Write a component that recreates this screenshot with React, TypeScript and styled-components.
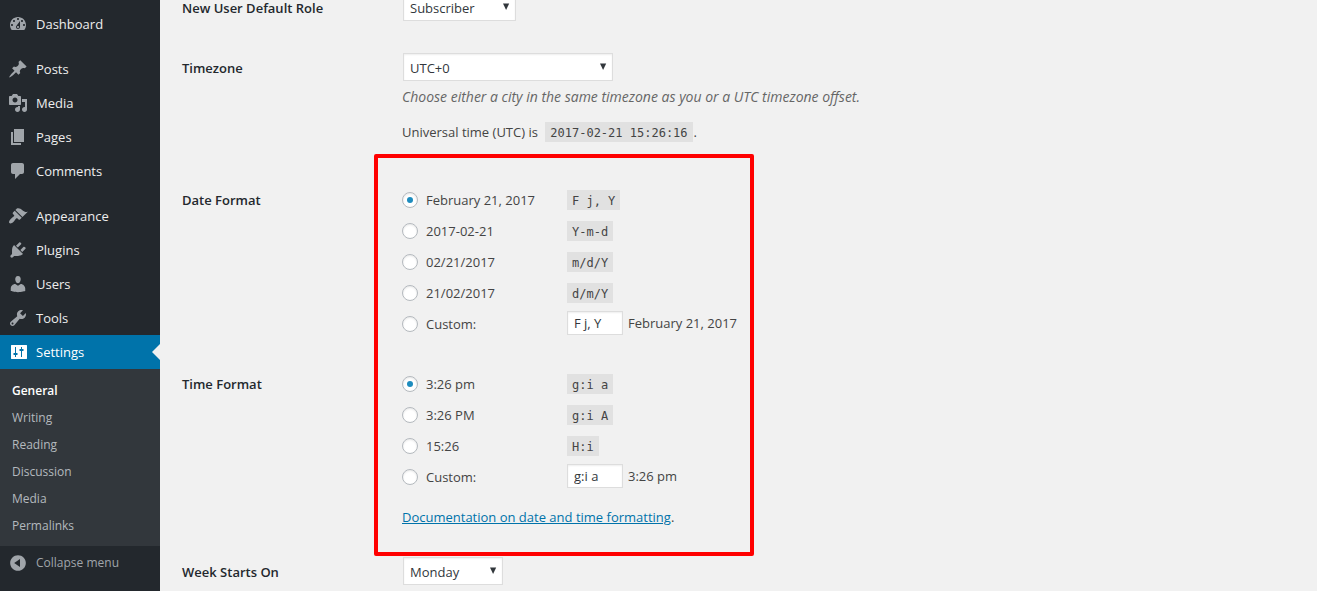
import React, { useState } from "react";
import styled, { createGlobalStyle, css } from "styled-components";

const GlobalStyle = createGlobalStyle`
  *, *::before, *::after { box-sizing: border-box; }
  body {
    margin: 0;
    background: #f1f1f1;
    color: #444;
    font: 13px/24px "Open Sans", "Noto Sans", sans-serif;
  }
  a { color: #0073aa; }
`;

const Page = styled.div`
  display: flex;
  height: 100vh;
  overflow: hidden;
`;

/* ---------- admin menu ---------- */

const Sidebar = styled.nav`
  flex: none;
  width: 160px;
  padding-top: 7px;
  background: #23282d;
`;

const Menu = styled.ul`
  list-style: none;
  margin: 0;
  padding: 0 0 11px;

  &:last-of-type { padding-bottom: 0; }
`;

const itemStyle = css`
  position: relative;
  display: flex;
  align-items: center;
  gap: 8px;
  width: 100%;
  height: 34px;
  padding: 0 8px;
  border: 0;
  font: inherit;
  line-height: 20px;
  text-decoration: none;
`;

const MenuLink = styled.a<{ $current?: boolean }>`
  ${itemStyle}
  color: ${(p) => (p.$current ? "#fff" : "#eee")};
  background: ${(p) => (p.$current ? "#0073aa" : "transparent")};

  svg { fill: ${(p) => (p.$current ? "#fff" : "#a0a5aa")}; }

  ${(p) =>
    p.$current &&
    css`
      &::after {
        content: "";
        position: absolute;
        right: 0;
        top: 9px;
        border: 8px solid transparent;
        border-left-width: 0;
        border-right-color: #f1f1f1;
      }
    `}
`;

const CollapseButton = styled.button`
  ${itemStyle}
  font-size: 12px;
  color: #a0a5aa;
  background: transparent;
  cursor: pointer;

  svg { fill: #a0a5aa; }
`;

const MenuIcon = styled.svg`
  flex: none;
  width: 20px;
  height: 20px;
`;

const Submenu = styled.ul`
  list-style: none;
  margin: 0;
  padding: 8px 0 7px;
  background: #32373c;
`;

const SubmenuLink = styled.a<{ $current?: boolean }>`
  display: block;
  padding: 0 12px;
  font-size: 12px;
  line-height: 27px;
  font-weight: ${(p) => (p.$current ? 600 : 400)};
  color: ${(p) => (p.$current ? "#fff" : "#b4b9be")};
  text-decoration: none;
`;

/* ---------- settings form ---------- */

const Main = styled.main`
  flex: 1;
  min-width: 0;
  padding-left: 22px;
  overflow: hidden;
`;

/* The form is scrolled so that its first row is partly out of view. */
const Form = styled.form`
  margin-top: -23px;
`;

const Row = styled.div<{ $end?: number }>`
  display: grid;
  grid-template-columns: 220px 1fr;
  padding: 16px 0 ${(p) => p.$end ?? 16}px;
`;

const rowTitle = css`
  color: #23282d;
  font-weight: 600;
  line-height: 18px;
`;

const RowLabel = styled.label`
  ${rowTitle}
  padding-top: 6px;
`;

const RowHeading = styled.div`
  ${rowTitle}
  padding-top: 4px;
`;

const SelectBox = styled.div<{ $width: number }>`
  position: relative;
  width: ${(p) => p.$width}px;
  height: 28px;
  margin-left: 1px;

  svg {
    position: absolute;
    right: 6px;
    top: 10px;
    fill: #32373c;
    pointer-events: none;
  }
`;

const Select = styled.select`
  appearance: none;
  width: 100%;
  height: 100%;
  padding: 2px 20px 0 6px;
  border: 1px solid #ddd;
  border-radius: 0;
  background: #fff;
  box-shadow: inset 0 1px 2px rgba(0, 0, 0, 0.07);
  color: #32373c;
  font: inherit;
`;

const Description = styled.p`
  margin: 4px 0 11px;
  color: #666;
  font-size: 14px;
  font-style: italic;
`;

const Code = styled.code`
  display: inline-block;
  height: 20px;
  padding: 0 5px;
  background: #e1e1e1;
  font: 12px/22px "DejaVu Sans Mono", monospace;
  white-space: pre;
`;

const UtcTime = styled.p`
  margin: 0;

  ${Code} {
    margin: 2px 1px 0 4px;
    vertical-align: top;
  }
`;

const Highlighted = styled.div`
  position: relative;

  &::after {
    content: "";
    position: absolute;
    left: 192px;
    top: -17px;
    bottom: -15px;
    width: 380px;
    border: 4px solid #f00;
    border-radius: 2px;
    pointer-events: none;
  }
`;

const Choices = styled.fieldset`
  display: flex;
  flex-direction: column;
  gap: 5px;
  min-width: 0;
  margin: 0;
  padding: 0;
  border: 0;
`;

const Choice = styled.div`
  display: flex;
  align-items: center;
  height: 26px;
`;

const ChoiceLabel = styled.label`
  display: flex;
  align-items: center;
  gap: 8px;
  width: 165px;
`;

const Radio = styled.input`
  appearance: none;
  display: grid;
  place-items: center;
  flex: none;
  width: 16px;
  height: 16px;
  margin: 0;
  border: 1px solid #b4b9be;
  border-radius: 50%;
  background: #fff;
  box-shadow: inset 0 1px 2px rgba(0, 0, 0, 0.1);

  &:checked::before {
    content: "";
    width: 6px;
    height: 6px;
    border-radius: 50%;
    background: #1e8cbe;
  }
`;

const CustomFormat = styled.div`
  display: flex;
  align-items: center;
  gap: 5px;
  padding-bottom: 2px;
`;

const FormatInput = styled.input`
  width: 56px;
  height: 24px;
  padding: 0 6px;
  border: 1px solid #ddd;
  background: #fff;
  box-shadow: inset 0 1px 2px rgba(0, 0, 0, 0.07);
  color: #32373c;
  font: inherit;
`;

const DocLink = styled.p`
  margin: 10px 0 0;
`;

/* ---------- data ---------- */

const icons = {
  dashboard:
    "M3.76 16h12.48c1.1-1.37 1.76-3.11 1.76-5 0-4.42-3.58-8-8-8s-8 3.58-8 8c0 1.89.66 3.63 1.76 5zM10 4c.55 0 1 .45 1 1s-.45 1-1 1-1-.45-1-1 .45-1 1-1zM6 6c.55 0 1 .45 1 1s-.45 1-1 1-1-.45-1-1 .45-1 1-1zm8 0c.55 0 1 .45 1 1s-.45 1-1 1-1-.45-1-1 .45-1 1-1zm-5.37 5.55L12 7v6c0 1.1-.9 2-2 2s-2-.9-2-2c0-.57.24-1.08.63-1.45zM4 10c.55 0 1 .45 1 1s-.45 1-1 1-1-.45-1-1 .45-1 1-1zm12 0c.55 0 1 .45 1 1s-.45 1-1 1-1-.45-1-1 .45-1 1-1zm-5 3c0-.55-.45-1-1-1s-1 .45-1 1 .45 1 1 1 1-.45 1-1z",
  posts:
    "M10.44 3.02l1.82-1.82 6.36 6.35-1.83 1.82c-1.05-.68-2.48-.57-3.41.36l-.75.75c-.92.93-1.04 2.35-.35 3.41l-1.83 1.82-2.41-2.41-2.8 2.79c-.42.42-3.38 2.71-3.8 2.29s1.86-3.39 2.28-3.81l2.79-2.79L4.1 9.36l1.83-1.82c1.05.69 2.48.57 3.4-.36l.75-.75c.93-.92 1.05-2.35.36-3.41z",
  media:
    "M13 11V4c0-.55-.45-1-1-1h-1.67L9 1H5L3.67 3H2c-.55 0-1 .45-1 1v7c0 .55.45 1 1 1h10c.55 0 1-.45 1-1zM7 4.5c1.38 0 2.5 1.12 2.5 2.5S8.38 9.5 7 9.5 4.5 8.38 4.5 7 5.62 4.5 7 4.5zM14 6h5v10.5c0 1.38-1.12 2.5-2.5 2.5S14 17.88 14 16.5s1.12-2.5 2.5-2.5c.17 0 .34.02.5.05V9h-3V6zm-4 8.05V13h2v3.5c0 1.38-1.12 2.5-2.5 2.5S7 17.88 7 16.5 8.12 14 9.5 14c.17 0 .34.02.5.05z",
  pages: "M6 15V2h10v13H6zm-1 1h8v2H3V5h2v11z",
  comments:
    "M5 2h9c1.1 0 2 .9 2 2v7c0 1.1-.9 2-2 2h-2l-5 5v-5H5c-1.1 0-2-.9-2-2V4c0-1.1.9-2 2-2z",
  appearance:
    "M14.48 11.06L7.41 3.99l1.5-1.5c.5-.56 2.3-.47 3.51.32 1.21.8 1.43 1.28 2.91 2.1 1.18.64 2.45 1.26 4.45.85zm-.71.71L6.7 4.7 4.93 6.47c-.39.39-.39 1.02 0 1.41l1.06 1.06c.39.39.39 1.03 0 1.42-.6.6-1.43 1.11-2.21 1.69-.35.26-.7.53-1.01.84C1.43 14.23.4 16.08 1.4 17.07c.99 1 2.84-.03 4.18-1.36.31-.31.58-.66.85-1.02.57-.78 1.08-1.61 1.69-2.21.39-.39 1.02-.39 1.41 0l1.06 1.06c.39.39 1.02.39 1.41 0z",
  plugins:
    "M13.11 4.36L9.87 7.6 8 5.73l3.24-3.24c.35-.34 1.05-.2 1.56.32.52.51.66 1.21.31 1.55zm-8 1.77l.91-1.12 9.01 9.01-1.19.84c-.71.71-2.63 1.16-3.82 1.16H6.14L4.9 17.26c-.59.59-1.54.59-2.12 0-.59-.58-.59-1.53 0-2.12l1.24-1.24v-3.88c0-1.13.4-3.19 1.09-3.89zm7.26 3.97l3.24-3.24c.34-.35 1.04-.21 1.55.31.52.51.66 1.21.31 1.55l-3.24 3.25z",
  users:
    "M10 9.25c-2.27 0-2.73-3.44-2.73-3.44C7 4.02 7.82 2 9.97 2c2.16 0 2.98 2.02 2.71 3.81 0 0-.41 3.44-2.68 3.44zm0 2.57L12.72 10c2.39 0 4.52 2.33 4.52 4.53v2.49s-3.65 1.13-7.24 1.13c-3.65 0-7.24-1.13-7.24-1.13v-2.49c0-2.25 1.94-4.48 4.47-4.48z",
  tools:
    "M16.68 9.77c-1.34 1.34-3.3 1.67-4.95.99l-5.41 6.52c-.99.99-2.59.99-3.58 0s-.99-2.59 0-3.57l6.52-5.42c-.68-1.65-.35-3.61.99-4.95 1.28-1.28 3.12-1.62 4.72-1.06l-2.89 2.89 2.82 2.82 2.86-2.87c.53 1.58.18 3.39-1.08 4.65zM3.81 16.21c.4.39 1.04.39 1.43 0 .4-.4.4-1.04 0-1.43-.39-.4-1.03-.4-1.43 0-.39.39-.39 1.03 0 1.43z",
  settings:
    "M3.5 3h15c.28 0 .5.22.5.5v13c0 .28-.22.5-.5.5h-15c-.28 0-.5-.22-.5-.5v-13c0-.28.22-.5.5-.5zM7 5v6H5.500v2H7v2h1v-2h1.500v-2H8V5H7zm6 0v2h-1.500v2H13v6h1V9h1.500V7H14V5h-1z",
  collapse:
    "M10 2.16c4.33 0 7.84 3.51 7.84 7.84s-3.51 7.84-7.84 7.84S2.16 14.33 2.16 10 5.71 2.16 10 2.16zm2 11.72V6.12L6.18 9.97z",
};

type IconName = keyof typeof icons;

const menuGroups: { label: string; icon: IconName; current?: boolean }[][] = [
  [{ label: "Dashboard", icon: "dashboard" }],
  [
    { label: "Posts", icon: "posts" },
    { label: "Media", icon: "media" },
    { label: "Pages", icon: "pages" },
    { label: "Comments", icon: "comments" },
  ],
  [
    { label: "Appearance", icon: "appearance" },
    { label: "Plugins", icon: "plugins" },
    { label: "Users", icon: "users" },
    { label: "Tools", icon: "tools" },
    { label: "Settings", icon: "settings", current: true },
  ],
];

const submenu = ["General", "Writing", "Reading", "Discussion", "Media", "Permalinks"];

const dateFormats = [
  ["February 21, 2017", "F j, Y"],
  ["2017-02-21", "Y-m-d"],
  ["02/21/2017", "m/d/Y"],
  ["21/02/2017", "d/m/Y"],
];

const timeFormats = [
  ["3:26 pm", "g:i a"],
  ["3:26 PM", "g:i A"],
  ["15:26", "H:i"],
];

/* ---------- components ---------- */

const Icon = ({ name }: { name: IconName }) => (
  <MenuIcon viewBox="0 0 20 20" aria-hidden="true">
    <path d={icons[name]} fillRule="evenodd" />
  </MenuIcon>
);

const Dropdown = ({ id, width, options }: { id: string; width: number; options: string[] }) => (
  <SelectBox $width={width}>
    <Select id={id}>
      {options.map((o) => (
        <option key={o}>{o}</option>
      ))}
    </Select>
    <svg width="8" height="7" viewBox="0 0 8 7" aria-hidden="true">
      <path d="M1 0.5h6.2L4.1 7z" />
    </svg>
  </SelectBox>
);

type FormatChoicesProps = {
  name: string;
  title: string;
  formats: string[][];
  children?: React.ReactNode;
};

const FormatChoices = ({ name, title, formats, children }: FormatChoicesProps) => {
  const [selected, setSelected] = useState(formats[0][1]);
  const [custom, setCustom] = useState(formats[0][1]);

  return (
    <Choices aria-label={title}>
      {formats.map(([example, format]) => (
        <Choice key={format}>
          <ChoiceLabel>
            <Radio
              type="radio"
              name={name}
              checked={selected === format}
              onChange={() => setSelected(format)}
            />
            {example}
          </ChoiceLabel>
          <Code>{format}</Code>
        </Choice>
      ))}
      <Choice>
        <ChoiceLabel>
          <Radio
            type="radio"
            name={name}
            checked={selected === "custom"}
            onChange={() => setSelected("custom")}
          />
          Custom:
        </ChoiceLabel>
        <CustomFormat>
          <FormatInput
            type="text"
            aria-label={`Custom ${title}`}
            value={custom}
            onChange={(e) => setCustom(e.target.value)}
          />
          <span>{formats[0][0]}</span>
        </CustomFormat>
      </Choice>
      {children}
    </Choices>
  );
};

export default function App() {
  return (
    <Page>
      <GlobalStyle />
      <Sidebar>
        {menuGroups.map((group) => (
          <Menu key={group[0].label}>
            {group.map((item) => (
              <li key={item.label}>
                <MenuLink href="#" $current={item.current}>
                  <Icon name={item.icon} />
                  {item.label}
                </MenuLink>
                {item.current && (
                  <Submenu>
                    {submenu.map((label, i) => (
                      <li key={label}>
                        <SubmenuLink href="#" $current={i === 0}>
                          {label}
                        </SubmenuLink>
                      </li>
                    ))}
                  </Submenu>
                )}
              </li>
            ))}
          </Menu>
        ))}
        <CollapseButton type="button">
          <Icon name="collapse" />
          Collapse menu
        </CollapseButton>
      </Sidebar>

      <Main>
        <Form>
          <Row>
            <RowLabel htmlFor="default_role">New User Default Role</RowLabel>
            <Dropdown id="default_role" width={113} options={["Subscriber", "Contributor", "Author", "Editor"]} />
          </Row>

          <Row $end={27}>
            <RowLabel htmlFor="timezone">Timezone</RowLabel>
            <div>
              <Dropdown id="timezone" width={210} options={["UTC+0", "UTC+1", "UTC+2"]} />
              <Description>
                Choose either a city in the same timezone as you or a UTC timezone offset.
              </Description>
              <UtcTime>
                Universal time (UTC) is <Code>2017-02-21 15:26:16</Code>.
              </UtcTime>
            </div>
          </Row>

          <Highlighted>
            <Row $end={18}>
              <RowHeading>Date Format</RowHeading>
              <FormatChoices name="date_format" title="Date Format" formats={dateFormats} />
            </Row>
            <Row $end={12}>
              <RowHeading>Time Format</RowHeading>
              <FormatChoices name="time_format" title="Time Format" formats={timeFormats}>
                <DocLink>
                  <a href="#">Documentation on date and time formatting</a>.
                </DocLink>
              </FormatChoices>
            </Row>
          </Highlighted>

          <Row>
            <RowLabel htmlFor="start_of_week">Week Starts On</RowLabel>
            <Dropdown id="start_of_week" width={100} options={["Monday", "Tuesday", "Wednesday", "Sunday"]} />
          </Row>
        </Form>
      </Main>
    </Page>
  );
}
